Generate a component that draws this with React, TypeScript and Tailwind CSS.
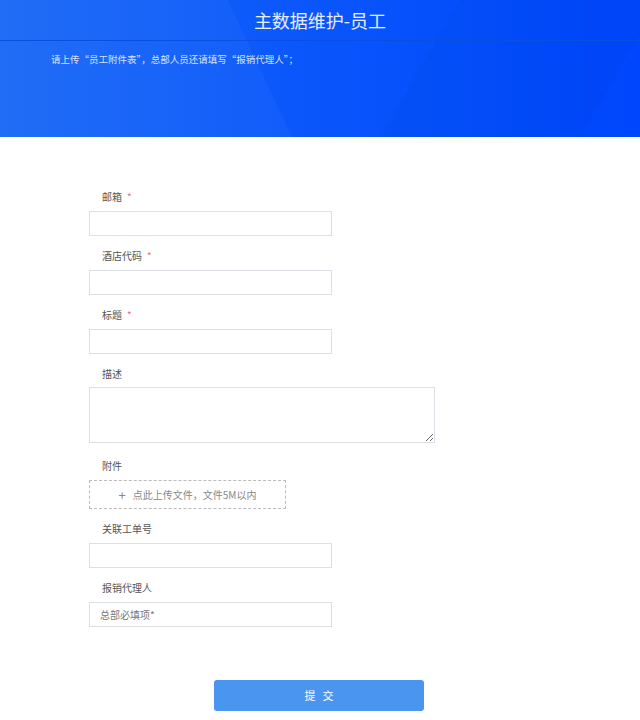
const font = { fontFamily: '"Noto Sans CJK SC", "Liberation Sans", sans-serif' }

function Label({ text, required }: { text: string; required?: boolean }) {
  return (
    <div className="h-[14px] pl-[13px] text-[10px] leading-[14px] text-[#555]">
      {text}
      {required && <span className="ml-[5px] text-[#f56c6c]">*</span>}
    </div>
  )
}

function Field({ text, required, placeholder }: { text: string; required?: boolean; placeholder?: string }) {
  return (
    <div className="flex flex-col gap-[7px]">
      <Label text={text} required={required} />
      <input
        placeholder={placeholder}
        className="h-[25px] w-[243px] border border-[#dcdfe6] px-[10px] text-[10px] text-[#555] outline-none placeholder:text-[#777]"
      />
    </div>
  )
}

export default function App() {
  return (
    <div className="min-h-[720px] w-[640px] bg-white" style={font}>
      <div className="relative h-[137px] overflow-hidden bg-gradient-to-r from-[#1a69f6] via-[#0a55fb] to-[#0046fd]">
        <div className="absolute -left-[60px] top-0 h-[137px] w-[320px] skew-x-[25deg] bg-white/[0.03]" />
        <div className="absolute left-[420px] top-0 h-[137px] w-[200px] -skew-x-[30deg] bg-black/[0.02]" />
        <div className="relative flex h-[41px] items-center justify-center border-b border-[#0a4fe0] text-[18px] text-white/90">
          主数据维护-员工
        </div>
        <div className="relative pl-[51px] pt-[11px] text-[9.5px] text-[#d6e2ff]">
          请上传“员工附件表”，总部人员还请填写“报销代理人”；
        </div>
      </div>

      <div className="flex flex-col gap-[13px] pl-[89px] pt-[53px]">
        <Field text="邮箱" required />
        <Field text="酒店代码" required />
        <Field text="标题" required />
        <div className="mb-[3px] flex flex-col gap-[6px]">
          <Label text="描述" />
          <textarea className="block h-[56px] w-[346px] border border-[#dcdfe6] outline-none" />
        </div>
        <div className="flex flex-col gap-[7px]">
          <Label text="附件" />
          <div className="flex h-[29px] w-[197px] items-center justify-center border border-dashed border-[#bbb] text-[10px] text-[#888]">
            <span className="mr-[7px] text-[13px] leading-none">+</span>点此上传文件，文件5M以内
          </div>
        </div>
        <Field text="关联工单号" />
        <Field text="报销代理人" placeholder="总部必填项*" />
      </div>

      <div className="flex justify-center pt-[53px] pb-[9px]">
        <button className="ml-[-2px] flex h-[31px] w-[210px] items-center justify-center gap-[7px] rounded-[3px] bg-[#4a95ef] text-[11px] text-white">
          <span>提</span>
          <span>交</span>
        </button>
      </div>
    </div>
  )
}
